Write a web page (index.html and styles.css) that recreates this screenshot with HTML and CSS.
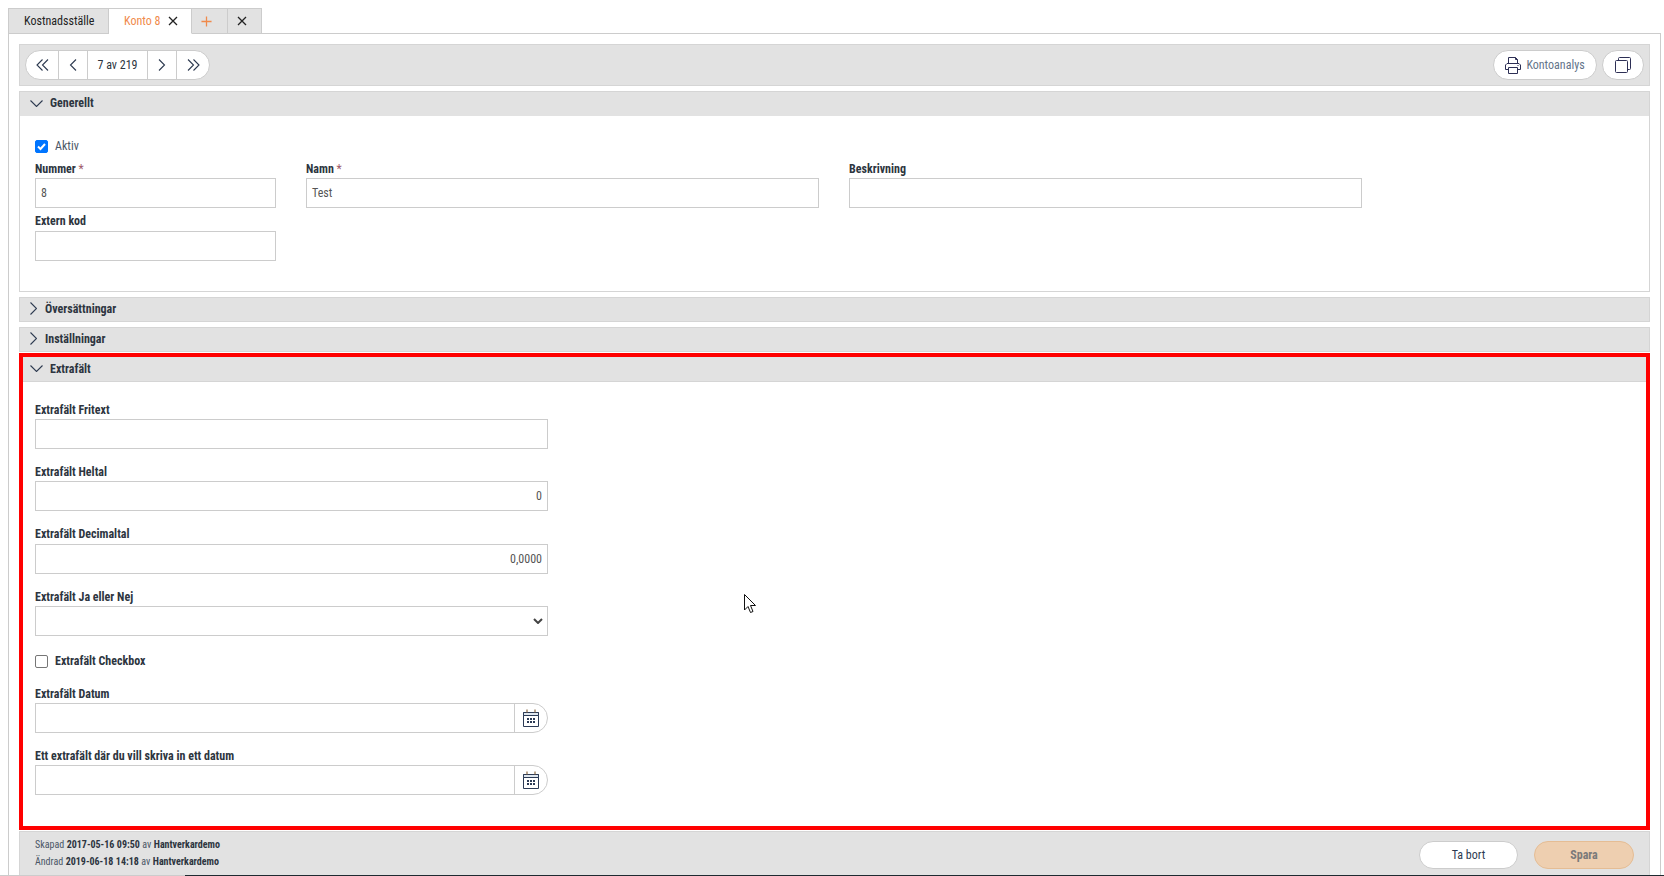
FILE: index.html
```html
<!DOCTYPE html>
<html lang="sv">
<head>
<meta charset="utf-8">
<title>Konto 8</title>
<link rel="stylesheet" href="styles.css">
</head>
<body>
<svg class="defs" width="0" height="0" aria-hidden="true">
  <symbol id="down" viewBox="0 0 13 7"><path d="M.5.500 6.500 6.500 12.500.5" fill="none" stroke="currentColor" stroke-width="1.1"/></symbol>
  <symbol id="right" viewBox="0 0 7 13"><path d="M.5.500 6.500 6.500.5 12.500" fill="none" stroke="currentColor" stroke-width="1.1"/></symbol>
  <symbol id="cal" viewBox="0 0 16 18">
    <path d="M.5 3.500h15v14h-15z" fill="#fff" stroke="#2b3a55"/>
    <path d="M.5 3.500h15v3h-15z" fill="#dfe7ef" stroke="#2b3a55"/>
    <path d="M4 .5v3M12 .5v3" stroke="#8a6a45" stroke-width="1.200"/>
    <path d="M4 9h2v2H4zM7 9h2v2H7zM10 9h2v2h-2zM4 12h2v2H4zM7 12h2v2H7zM10 12h2v2h-2z" fill="#2b3a55"/>
  </symbol>
</svg>

<div class="tabs">
  <div class="tab tab-first">Kostnadsställe</div>
  <div class="tab tab-active"><span>Konto 8</span><svg class="ico-x" viewBox="0 0 10 10"><path d="M1 1l8 8M9 1l-8 8"/></svg></div>
  <div class="tab tab-icon tab-plus"><svg viewBox="0 0 12 12"><path d="M6 .5v11M.5 6h11"/></svg></div>
  <div class="tab tab-icon tab-close"><svg class="ico-x" viewBox="0 0 10 10"><path d="M1 1l8 8M9 1l-8 8"/></svg></div>
</div>

<main class="panel">
  <div class="toolbar">
    <div class="pager">
      <div class="pg pg-first"><svg viewBox="0 0 13 12"><path d="M6.500.5 1 6l5.500 5.500M12 .5 6.500 6l5.500 5.500"/></svg></div>
      <div class="pg pg-step"><svg viewBox="0 0 8 12"><path d="M7 .5 1.500 6 7 11.500"/></svg></div>
      <div class="pg pg-text">7 av 219</div>
      <div class="pg pg-step"><svg viewBox="0 0 8 12"><path d="M1 .5 6.500 6 1 11.500"/></svg></div>
      <div class="pg pg-last"><svg viewBox="0 0 13 12"><path d="M1 .5 6.500 6 1 11.500M6.500.5 12 6l-5.500 5.500"/></svg></div>
    </div>
    <div class="tool-right">
      <div class="pill pill-analysis">
        <svg class="ico-print" viewBox="0 0 16 17"><path d="M3.500 6.500v-6h7l2 2v4"/><path d="M10.500.5v2h2"/><path d="M3.500 12.500h-3v-4.500l1.500-1.500h12l1.500 1.500v4.500h-3"/><path d="M3.500 10.500h9v6h-9z"/><path d="M12.500 8.500h1"/></svg>
        <span>Kontoanalys</span>
      </div>
      <div class="pill pill-copy"><svg viewBox="0 0 16 16"><path d="M3.500 3.500v-2a1 1 0 0 1 1-1h10a1 1 0 0 1 1 1v10a1 1 0 0 1-1 1h-2"/><path d="M1.500 3.500h10a1 1 0 0 1 1 1v10a1 1 0 0 1-1 1h-10a1 1 0 0 1-1-1v-10a1 1 0 0 1 1-1z"/></svg></div>
    </div>
  </div>

  <section class="sec">
    <header class="sec-head"><svg class="chev-d"><use href="#down"/></svg><b>Generellt</b></header>
    <div class="gen-body">
      <label class="check check-plain"><span class="box box-on"><svg viewBox="0 0 11 11"><path d="M2 5.500 4.500 8 9 3"/></svg></span>Aktiv</label>
      <div class="gen-row">
        <div class="f f-s"><label>Nummer <i>*</i></label><div class="in">8</div></div>
        <div class="f f-l"><label>Namn <i>*</i></label><div class="in">Test</div></div>
        <div class="f f-l"><label>Beskrivning</label><div class="in"></div></div>
      </div>
      <div class="gen-row">
        <div class="f f-s f-tight"><label>Extern kod</label><div class="in"></div></div>
      </div>
    </div>
  </section>

  <section class="sec sec-closed"><header class="sec-head"><svg class="chev-r"><use href="#right"/></svg><b>Översättningar</b></header></section>
  <section class="sec sec-closed"><header class="sec-head"><svg class="chev-r"><use href="#right"/></svg><b>Inställningar</b></header></section>

  <section class="sec sec-red">
    <header class="sec-head"><svg class="chev-d"><use href="#down"/></svg><b>Extrafält</b></header>
    <div class="extra">
      <div class="f"><label>Extrafält Fritext</label><div class="in"></div></div>
      <div class="f"><label>Extrafält Heltal</label><div class="in in-num">0</div></div>
      <div class="f f-decimal f-tight"><label>Extrafält Decimaltal</label><div class="in in-num">0,0000</div></div>
      <div class="f"><label>Extrafält Ja eller Nej</label><div class="in in-sel"><svg viewBox="0 0 10 6"><path d="M1 1l4 4 4-4"/></svg></div></div>
      <label class="check check-extra"><span class="box"></span>Extrafält Checkbox</label>
      <div class="f"><label>Extrafält Datum</label><div class="date"><div class="in"></div><div class="date-btn"><svg><use href="#cal"/></svg></div></div></div>
      <div class="f"><label>Ett extrafält där du vill skriva in ett datum</label><div class="date"><div class="in"></div><div class="date-btn"><svg><use href="#cal"/></svg></div></div></div>
    </div>
  </section>

  <footer class="foot">
    <div class="meta">
      <div>Skapad <b>2017-05-16 09:50</b> av <b>Hantverkardemo</b></div>
      <div>Ändrad <b>2019-06-18 14:18</b> av <b>Hantverkardemo</b></div>
    </div>
    <div class="foot-btns">
      <div class="btn btn-delete">Ta bort</div>
      <div class="btn btn-save">Spara</div>
    </div>
  </footer>
</main>

<svg class="cursor" viewBox="0 0 13 20"><path d="M.5.500v15.500l3.500-3.500 2.500 6 2.500-1-2.500-6h5z" fill="#fff" stroke="#111"/></svg>
<div class="taskline"></div>
</body>
</html>
```
FILE: styles.css
```css
* { box-sizing: border-box; }
html, body { height: 100%; }
body {
  margin: 0;
  height: 876px;
  overflow: hidden;
  position: relative;
  background: #fff;
  font-family: Roboto, "Liberation Sans", sans-serif;
  font-stretch: condensed;
  font-size: 12px;
  color: #2d3540;
  padding: 8px 3px 0 8px;
}
.defs { position: absolute; }
.tabs { display: flex; height: 26px; position: relative; z-index: 1; }
.tab {
  display: flex; align-items: center;
  background: #e2e2e2;
  border: 1px solid #ccc;
  border-left-width: 0;
  color: #222;
  white-space: nowrap;
}
.tab-first { border-left-width: 1px; width: 101px; padding-left: 15px; }
.tab-active { background: #fff; border-bottom-color: #fff; color: #f08a4b; width: 83px; padding-left: 15px; gap: 8px; }
.tab-icon { justify-content: center; padding-right: 6px; }
.tab-plus { width: 36px; }
.tab-close { width: 34px; padding-right: 5px; }
.tab svg { display: block; fill: none; }
.ico-x { width: 10px; height: 10px; stroke: #222; stroke-width: 1.3; }
.tab-plus svg { width: 11px; height: 11px; stroke: #f08a4b; stroke-width: 1.4; }

.panel {
  height: 843px;
  margin-top: -1px;
  border: 1px solid #ccc;
  border-bottom: 0;
  padding: 10px 10px 0;
  display: flex;
  flex-direction: column;
}
.toolbar {
  height: 42px;
  background: #e2e2e2;
  border: 1px solid #d5d5d5;
  display: flex;
  justify-content: space-between;
  align-items: center;
  padding: 0 5px;
}
.pager {
  display: flex; height: 30px;
  background: #fff;
  border: 1px solid #ccc;
  border-radius: 15px;
  overflow: hidden;
  color: #2d3540;
}
.pg { display: flex; align-items: center; justify-content: center; border-left: 1px solid #ccc; }
.pg:first-child { border-left: 0; }
.pg svg { display: block; fill: none; stroke: #2d3a50; stroke-width: 1.1; height: 12px; }
.pg-first { width: 32px; }
.pg-last { width: 33px; }
.pg-step { width: 29px; }
.pg-step svg { width: 8px; }
.pg-first svg, .pg-last svg { width: 13px; }
.pg-text { width: 60px; }
.tool-right { display: flex; gap: 5px; }
.pill {
  display: flex; align-items: center; justify-content: center; gap: 5px;
  height: 30px;
  background: #fff;
  border: 1px solid #ccc;
  border-radius: 15px;
  color: #64748a;
}
.pill svg { display: block; fill: none; stroke: #2d2f55; stroke-width: 1; }
.pill-analysis { width: 104px; }
.ico-print { width: 16px; height: 17px; }
.pill-copy { width: 42px; }
.pill-copy svg { width: 16px; height: 16px; }

.sec { border: 1px solid #d5d5d5; margin-top: 5px; }
.sec-head {
  height: 24px;
  background: #e2e2e2;
  display: flex; align-items: center;
  padding: 0 0 2px 10px;
  color: #2d3540;
}
.sec-head b { font-weight: 700; }
.sec-closed .sec-head { height: 23px; }
.chev-d { width: 13px; height: 7px; margin-right: 7px; color: #2d3a50; }
.chev-r { width: 7px; height: 13px; margin-right: 8px; color: #2d3a50; }
.gen-body { height: 175px; padding: 23px 15px 0; display: flex; flex-direction: column; }
.gen-row { display: flex; gap: 30px; margin-bottom: 6px; }
.check { display: flex; align-items: center; gap: 7px; height: 14px; font-weight: 700; }
.check-plain { font-weight: 400; color: #4a5666; margin-bottom: 8px; }
.check-extra { margin: 3px 0; }
.box {
  width: 13px; height: 13px;
  border: 1px solid #767676;
  border-radius: 2px;
  background: #fff;
  flex: none;
}
.box-on { background: #0075ff; border-color: #0075ff; }
.box svg { display: block; width: 11px; height: 11px; fill: none; stroke: #fff; stroke-width: 2; }
.f label { display: block; font-weight: 700; line-height: 17px; color: #2d3540; }
.f label i { font-style: normal; color: #a05a6a; font-weight: 400; }
.f-tight label { line-height: 15px; margin-bottom: 2px; }
.f-s { width: 241px; }
.f-l { width: 513px; }
.f-decimal { margin-top: 1px; }
.in {
  height: 30px;
  border: 1px solid #ccc;
  background: #fff;
  padding: 0 5px;
  display: flex; align-items: center;
  color: #555;
}
.in-num { justify-content: flex-end; }
.in-sel { justify-content: flex-end; padding-right: 4px; }
.in-sel svg { display: block; width: 10px; height: 6px; fill: none; stroke: #444; stroke-width: 2; }

.sec-red { border: 4px solid #f00; margin-top: 1px; height: 477px; }
.sec-red .sec-head { height: 25px; padding: 0 0 1px 7px; border-bottom: 1px solid #d5d5d5; }
.extra { padding: 20px 0 0 12px; width: 525px; display: flex; flex-direction: column; gap: 15px; }
.date { display: flex; }
.date .in { flex: 1; }
.date-btn {
  width: 34px; height: 30px;
  border: 1px solid #ccc;
  border-radius: 0 15px 15px 0;
  display: flex; align-items: center; justify-content: center;
  margin-left: -1px;
}
.date-btn svg { display: block; width: 16px; height: 18px; }

.foot {
  flex: 1;
  margin-top: 1px;
  background: #e2e2e2;
  border: 1px solid #d5d5d5;
  display: flex;
  justify-content: space-between;
  align-items: center;
  padding: 0 15px;
}
.meta { font-size: 10px; line-height: 17px; color: #4a5666; margin-top: -2px; word-spacing: .2px; }
.meta b { color: #2d3540; }
.foot-btns { display: flex; gap: 16px; margin-top: 2px; }
.btn {
  width: 100px; height: 28px;
  border: 1px solid #ccc;
  border-radius: 14px;
  background: #fff;
  display: flex; align-items: center; justify-content: center;
  color: #2d3a50;
}
.btn-delete { width: 99px; }
.btn-save { background: #eecfb0; border-color: #e5bd94; color: #7a7a7a; font-weight: 700; }

.cursor { position: absolute; left: 744px; top: 594px; width: 13px; height: 20px; }
.taskline { position: absolute; left: 0; right: 0; bottom: 0; height: 1px; background: linear-gradient(to right, #ccc 185px, #1e2a30 185px); }
```
